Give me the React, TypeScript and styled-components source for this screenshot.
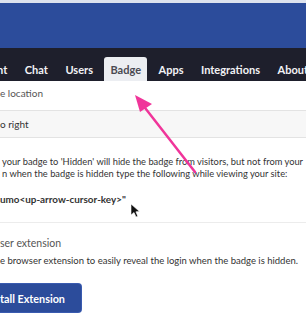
import React from "react";
import styled, { createGlobalStyle } from "styled-components";

const Global = createGlobalStyle`
  html, body { margin: 0; padding: 0; background: #fff; overflow: hidden; }
  body { font-family: Lato, "Open Sans", "Liberation Sans", sans-serif; width: 306px; height: 317px; }
`;

const Page = styled.div`
  position: relative;
  width: 306px;
  height: 317px;
  overflow: hidden;
  background: #fff;
`;

const TopStrip = styled.div`
  height: 3px;
  background: #dde2ee;
`;

const Header = styled.div`
  height: 45px;
  background: #2c4c9b;
`;

const Nav = styled.nav`
  height: 33px;
  background: #1e1f2c;
  display: flex;
  align-items: flex-end;
  gap: 5.5px;
  margin-left: -24px;
  white-space: nowrap;
`;

const Tab = styled.div<{ $active?: boolean }>`
  height: 24px;
  padding: 0 6px;
  display: flex;
  align-items: center;
  font-size: 11px;
  font-weight: 700;
  color: ${(p) => (p.$active ? "#4a4a52" : "#f2f2f5")};
  background: ${(p) => (p.$active ? "#eceef2" : "transparent")};
  border-radius: 3px 3px 0 0;
`;

const Content = styled.div`
  display: flex;
  flex-direction: column;
`;

const Label = styled.div`
  font-size: 10px;
  color: #555;
  height: 24px;
  line-height: 24px;
`;

const Select = styled.div`
  margin: 5px -20px 0 -10px;
  height: 26px;
  border: 1px solid #e3e3e3;
  background: #f7f7f7;
  font-size: 10px;
  color: #333;
  display: flex;
  align-items: center;
  padding-left: 9px;
`;

const Para = styled.p`
  margin: 18px 0 0 2px;
  font-size: 9.3px;
  line-height: 12px;
  color: #333;
  white-space: nowrap;
`;

const Code = styled.div`
  margin-top: 13px;
  font-size: 9.9px;
  font-weight: 700;
  color: #333;
  white-space: nowrap;
  line-height: 12px;
`;

const Divider = styled.hr`
  margin: 17px 0 0;
  border: none;
  border-top: 1px solid #ececec;
`;

const SubHead = styled.div`
  margin-top: 12px;
  font-size: 10.5px;
  color: #555;
  line-height: 16px;
`;

const Note = styled.p`
  margin: 4px 0 0;
  font-size: 9.5px;
  color: #333;
  line-height: 12px;
  white-space: nowrap;
`;

const Button = styled.div`
  margin: 17px 0 0 -10px;
  width: 91px;
  height: 28px;
  border-radius: 3px;
  background: #2c4c9b;
  box-shadow: 0 0 0 1px #3a5bb0;
  color: #fff;
  font-size: 10.8px;
  font-weight: 700;
  display: flex;
  align-items: center;
  padding-left: 10px;
  box-sizing: border-box;
`;

const Overlay = styled.svg`
  position: absolute;
  left: 0;
  top: 0;
  pointer-events: none;
`;

export default function App() {
  return (
    <>
      <Global />
      <Page>
        <TopStrip />
        <Header />
        <Nav>
          <Tab>ment</Tab>
          <Tab>Chat</Tab>
          <Tab>Users</Tab>
          <Tab $active>Badge</Tab>
          <Tab>Apps</Tab>
          <Tab>Integrations</Tab>
          <Tab>About</Tab>
        </Nav>
        <Content>
          <Label>e location</Label>
          <Select>o right</Select>
          <Para>
            your badge to 'Hidden' will hide the badge from visitors, but not from your
            <br />
            n when the badge is hidden type the following while viewing your site:
          </Para>
          <Code>umo&lt;up-arrow-cursor-key&gt;"</Code>
          <Divider />
          <SubHead>ser extension</SubHead>
          <Note>e browser extension to easily reveal the login when the badge is hidden.</Note>
          <Button>tall Extension</Button>
        </Content>
        <Overlay width="306" height="317" viewBox="0 0 306 317">
          <line x1="195" y1="172" x2="142" y2="104" stroke="#f0359a" strokeWidth="2.5" strokeLinecap="round" />
          <polygon points="135,95 152,104 140,112" fill="#f0359a" />
          <path d="M131 204 L131 215 L134 212.5 L136 217 L137.8 216.2 L135.9 211.8 L139.5 211.5 Z" fill="#111" stroke="#fff" strokeWidth="0.6" />
        </Overlay>
      </Page>
    </>
  );
}
